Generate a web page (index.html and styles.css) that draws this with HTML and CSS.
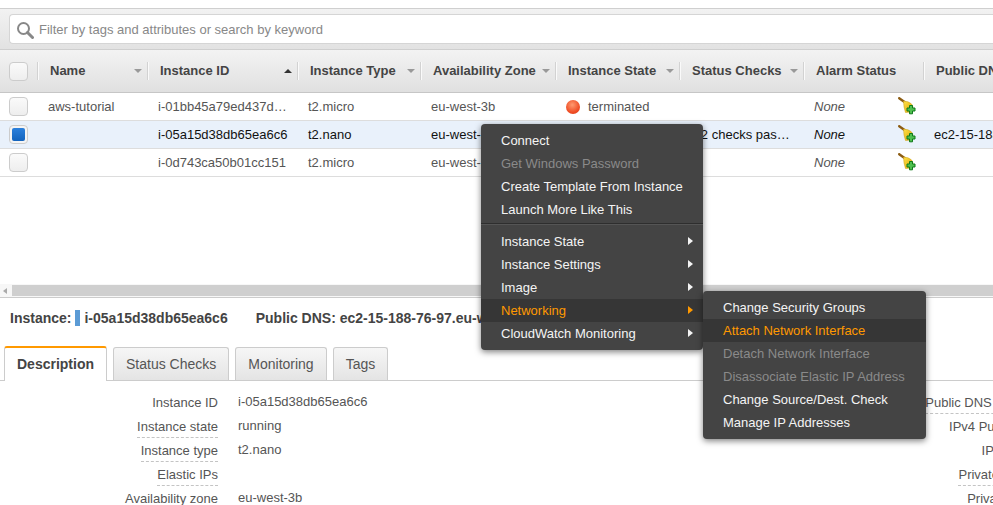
FILE: index.html
```html
<!DOCTYPE html>
<html lang="en">
<head>
    <meta charset="UTF-8">
    <meta name="viewport" content="width=device-width, initial-scale=1.0">
    <title>EC2 Instances</title>
    <link rel="stylesheet" href="styles.css">
</head>
<body>
<div class="page">

    <!-- Filter bar -->
    <div class="filter-bar">
        <div class="search-box">
            <svg class="search-icon" width="18" height="18" viewBox="0 0 18 18">
                <circle cx="7.5" cy="7.5" r="5.5" fill="none" stroke="#888" stroke-width="2"/>
                <path d="M11.5 11.5 L16.5 16.5" stroke="#888" stroke-width="3" stroke-linecap="round"/>
            </svg>
            <span>Filter by tags and attributes or search by keyword</span>
        </div>
    </div>

    <!-- Instance table -->
    <div class="table-head table-cols">
        <div class="cell-check"><span class="check"></span></div>
        <div class="th">Name<i class="arrow"></i></div>
        <div class="th">Instance ID<i class="arrow up"></i></div>
        <div class="th">Instance Type<i class="arrow"></i></div>
        <div class="th">Availability Zone<i class="arrow"></i></div>
        <div class="th">Instance State<i class="arrow"></i></div>
        <div class="th">Status Checks<i class="arrow"></i></div>
        <div class="th">Alarm Status</div>
        <div class="th">Public DNS (IPv4)</div>
    </div>

    <div class="row table-cols">
        <div class="cell-check"><span class="check"></span></div>
        <div class="td">aws-tutorial</div>
        <div class="td ellipsis">i-01bb45a79ed437d72</div>
        <div class="td">t2.micro</div>
        <div class="td">eu-west-3b</div>
        <div class="td state"><i class="dot"></i>terminated</div>
        <div class="td"></div>
        <div class="td alarm"><em>None</em>
            <svg class="broom" width="18" height="18" viewBox="0 0 18 18"><use href="#broom"/></svg>
        </div>
        <div class="td"></div>
    </div>

    <div class="row selected table-cols">
        <div class="cell-check"><span class="check on"></span></div>
        <div class="td"></div>
        <div class="td">i-05a15d38db65ea6c6</div>
        <div class="td">t2.nano</div>
        <div class="td">eu-west-3b</div>
        <div class="td"></div>
        <div class="td ellipsis">2/2 checks passed</div>
        <div class="td alarm"><em>None</em>
            <svg class="broom" width="18" height="18" viewBox="0 0 18 18"><use href="#broom"/></svg>
        </div>
        <div class="td nowrap">ec2-15-188-76-97.eu-west-3</div>
    </div>

    <div class="row table-cols">
        <div class="cell-check"><span class="check"></span></div>
        <div class="td"></div>
        <div class="td">i-0d743ca50b01cc151</div>
        <div class="td">t2.micro</div>
        <div class="td">eu-west-3b</div>
        <div class="td"></div>
        <div class="td"></div>
        <div class="td alarm"><em>None</em>
            <svg class="broom" width="18" height="18" viewBox="0 0 18 18"><use href="#broom"/></svg>
        </div>
        <div class="td"></div>
    </div>

    <div class="table-space"></div>

    <!-- Horizontal scrollbar -->
    <div class="scrollbar">
        <i class="scroll-left"></i>
        <div class="scroll-thumb"></div>
    </div>

    <!-- Selected instance -->
    <div class="instance-title">
        <b>Instance:</b><i class="blue-mark"></i><b>i-05a15d38db65ea6c6</b>
        <b class="dns-title">Public DNS: ec2-15-188-76-97.eu-west-3.compute.amazonaws.com</b>
    </div>

    <div class="tabs">
        <div class="tab active">Description</div>
        <div class="tab">Status Checks</div>
        <div class="tab">Monitoring</div>
        <div class="tab">Tags</div>
    </div>

    <div class="details">
        <div class="detail-col">
            <div class="detail"><span class="label">Instance ID</span><span class="value">i-05a15d38db65ea6c6</span></div>
            <div class="detail"><span class="label dashed">Instance state</span><span class="value">running</span></div>
            <div class="detail"><span class="label dashed">Instance type</span><span class="value">t2.nano</span></div>
            <div class="detail"><span class="label dashed">Elastic IPs</span><span class="value"></span></div>
            <div class="detail"><span class="label">Availability zone</span><span class="value">eu-west-3b</span></div>
        </div>
        <div class="detail-col right">
            <div class="detail"><span class="label dashed">Public DNS (IPv4)</span></div>
            <div class="detail"><span class="label">IPv4 Public IP</span></div>
            <div class="detail"><span class="label">IPv6 IPs</span></div>
            <div class="detail"><span class="label dashed">Private DNS</span></div>
            <div class="detail"><span class="label">Private IPs</span></div>
        </div>
    </div>

    <!-- Context menu -->
    <ul class="menu main-menu">
        <li>Connect</li>
        <li class="disabled">Get Windows Password</li>
        <li>Create Template From Instance</li>
        <li>Launch More Like This</li>
        <li class="sep"></li>
        <li class="more">Instance State</li>
        <li class="more">Instance Settings</li>
        <li class="more">Image</li>
        <li class="more hover">Networking</li>
        <li class="more">CloudWatch Monitoring</li>
    </ul>

    <ul class="menu sub-menu">
        <li>Change Security Groups</li>
        <li class="hover">Attach Network Interface</li>
        <li class="disabled">Detach Network Interface</li>
        <li class="disabled">Disassociate Elastic IP Address</li>
        <li>Change Source/Dest. Check</li>
        <li>Manage IP Addresses</li>
    </ul>

    <!-- Broom icon used in the alarm column -->
    <svg width="0" height="0" class="defs">
        <defs>
            <linearGradient id="bristle" x1="0" y1="0" x2="1" y2="1">
                <stop offset="0" stop-color="#ffe14a"/>
                <stop offset="1" stop-color="#d9a400"/>
            </linearGradient>
            <g id="broom">
                <path d="M1.2 1.2 L6.5 5" stroke="#8c5c12" stroke-width="2.4" stroke-linecap="round"/>
                <path d="M5.5 4 L10 4.8 Q14.5 6.5 15 10 L13 15 L7.5 15.5 Q5.5 10 5.5 4 Z" fill="url(#bristle)" stroke="#c79a10" stroke-width=".5"/>
                <path d="M11.5 8.5 h3 v2.5 h2.5 v3 h-2.5 v2.8 h-3 v-2.8 h-2.5 v-3 h2.5 Z" fill="#4fc04f" stroke="#0f7a1a" stroke-width="1"/>
            </g>
        </defs>
    </svg>
</div>
</body>
</html>
```

FILE: styles.css
```css
/* Page */
html, body {
    margin: 0;
    height: 505px;
    overflow: hidden;
}

.page {
    position: relative;
    display: flex;
    flex-direction: column;
    height: 505px;
    overflow: hidden;
    padding-top: 8px;
    box-sizing: border-box;
    background: #fff;
    color: #555;
    font-family: "Liberation Sans", Arial, sans-serif;
    font-size: 13px;
}

.defs {
    position: absolute;
}

/* Filter bar */
.filter-bar {
    height: 41px;
    flex: none;
    padding: 5px 0 0 9px;
    box-sizing: border-box;
    border-top: 1px solid #cfcfcf;
    background: linear-gradient(#f2f2f2, #e2e2e2);
}

.search-box {
    display: flex;
    align-items: center;
    height: 30px;
    box-sizing: border-box;
    padding-left: 6px;
    border: 1px solid #d5d5d5;
    border-right: 0;
    border-radius: 4px 0 0 4px;
    background: #fff;
    color: #888;
}

.search-icon {
    margin-right: 5px;
    margin-top: 2px;
}

/* Table */
.table-cols {
    display: grid;
    grid-template-columns: 38px 110px 150px 123px 135px 124px 124px 120px 200px;
    flex: none;
}

.table-head {
    height: 44px;
    align-items: center;
    border-top: 1px solid #cfcfcf;
    border-bottom: 1px solid #c6c6c6;
    box-sizing: border-box;
    background: linear-gradient(#f3f3f3, #e0e0e0);
    color: #444;
    font-weight: bold;
}

.th {
    position: relative;
    height: 18px;
    line-height: 18px;
    padding-left: 11px;
    border-left: 1px solid #fafafa;
    box-shadow: -1px 0 0 #d2d2d2;
    white-space: nowrap;
}

.arrow {
    position: absolute;
    right: 6px;
    top: 7px;
    border-left: 4px solid transparent;
    border-right: 4px solid transparent;
    border-top: 4px solid #999;
}

.arrow.up {
    border-top: 0;
    border-bottom: 4px solid #333;
}

.row {
    height: 28px;
    align-items: center;
    border-bottom: 1px solid #ddd;
    box-sizing: border-box;
}

.row.selected {
    background: #e9f1fb;
    color: #111;
}

.td {
    padding-left: 10px;
    white-space: nowrap;
    min-width: 0;
}

.ellipsis {
    overflow: hidden;
    text-overflow: ellipsis;
    padding-right: 10px;
}

.state {
    display: flex;
    align-items: center;
}

.dot {
    width: 14px;
    height: 14px;
    margin-right: 8px;
    border-radius: 50%;
    background: radial-gradient(circle at 45% 35%, #ff9a70, #ee4a22 65%, #d03a18);
}

.alarm {
    display: flex;
    align-items: center;
    justify-content: space-between;
    padding-right: 8px;
    position: relative;
}

.broom {
    margin-top: -1px;
}

.cell-check {
    display: flex;
    padding-left: 9px;
}

.check {
    display: block;
    width: 19px;
    height: 19px;
    box-sizing: border-box;
    border: 1px solid #ccc;
    border-radius: 4px;
    background: linear-gradient(#fafafa, #eee);
}

.check.on {
    background: #f4f4f4;
    position: relative;
}

.check.on::after {
    content: "";
    position: absolute;
    inset: 2px;
    border-radius: 2px;
    background: linear-gradient(#2b80dc, #1263bd);
}

.table-space {
    flex: none;
    height: 107px;
}

/* Scrollbar */
.scrollbar {
    flex: none;
    display: flex;
    align-items: center;
    height: 14px;
    background: #f7f7f7;
    border-bottom: 1px solid #ccc;
    box-sizing: border-box;
}

.scroll-left {
    margin: 0 5px 0 3px;
    border-top: 3px solid transparent;
    border-bottom: 3px solid transparent;
    border-right: 4px solid #aaa;
}

.scroll-thumb {
    flex: 1;
    height: 11px;
    margin-top: -1px;
    background: #cfcfcf;
}

/* Instance title */
.instance-title {
    flex: none;
    display: flex;
    align-items: center;
    height: 40px;
    padding-left: 10px;
    font-size: 14px;
    color: #444;
    white-space: nowrap;
}

.blue-mark {
    width: 5px;
    height: 16px;
    margin: 0 4px;
    background: #5b9bd5;
}

.dns-title {
    margin-left: 28px;
}

/* Tabs */
.tabs {
    flex: none;
    display: flex;
    align-items: flex-end;
    height: 34px;
    margin-top: 8px;
    padding-left: 4px;
    border-bottom: 1px solid #ccc;
    font-size: 14px;
}

.tab {
    height: 32px;
    line-height: 32px;
    margin-right: 6px;
    padding: 0 12px;
    border: 1px solid #ccc;
    border-bottom: 0;
    border-radius: 3px 3px 0 0;
    background: linear-gradient(#f6f6f6, #e4e4e4);
}

.tab.active {
    height: 33px;
    line-height: 33px;
    margin-bottom: -1px;
    padding: 0 12px;
    border-top: 2px solid #f90;
    background: #fff;
    color: #444;
    font-weight: bold;
}

/* Details */
.details {
    flex: none;
    display: flex;
    padding-top: 10px;
    white-space: nowrap;
}

.detail-col {
    width: 700px;
    flex: none;
}

.detail-col.right {
    width: 330px;
}

.detail {
    display: flex;
    height: 24px;
    line-height: 24px;
}

.label {
    display: block;
    height: 22px;
    margin-left: auto;
    line-height: 24px;
    box-sizing: content-box;
}

.detail-col:first-child .label-wrap {
    width: 218px;
}

.detail-col:first-child .label {
    margin-left: 0;
    width: auto;
}

.detail-col:first-child .detail {
    display: grid;
    grid-template-columns: 218px 1fr;
    column-gap: 20px;
}

.detail-col:first-child .label {
    justify-self: end;
}

.dashed {
    border-bottom: 1px dashed #c4c4c4;
}

.value {
    margin-top: -1px;
}

/* Context menus */
.menu {
    position: absolute;
    margin: 0;
    padding: 5px 0;
    list-style: none;
    background: #444;
    border-radius: 4px;
    box-shadow: 0 2px 6px rgba(0, 0, 0, 0.5);
    color: #f4f4f4;
}

.main-menu {
    left: 481px;
    top: 124px;
    width: 222px;
}

.sub-menu {
    left: 703px;
    top: 291px;
    width: 223px;
}

.menu li {
    position: relative;
    height: 23px;
    line-height: 23px;
    padding-left: 20px;
    white-space: nowrap;
}

.menu li.disabled {
    color: #8a8a8a;
}

.menu li.hover {
    background: #363636;
    color: #f90;
}

.menu li.sep {
    height: 0;
    margin: 2px 0 5px;
    padding: 0;
    border-top: 1px solid #2e2e2e;
    border-bottom: 1px solid #555;
}

.menu li.more::after {
    content: "";
    position: absolute;
    right: 10px;
    top: 7px;
    border-top: 4px solid transparent;
    border-bottom: 4px solid transparent;
    border-left: 5px solid #f4f4f4;
}

.menu li.more.hover::after {
    border-left-color: #f90;
}
```
